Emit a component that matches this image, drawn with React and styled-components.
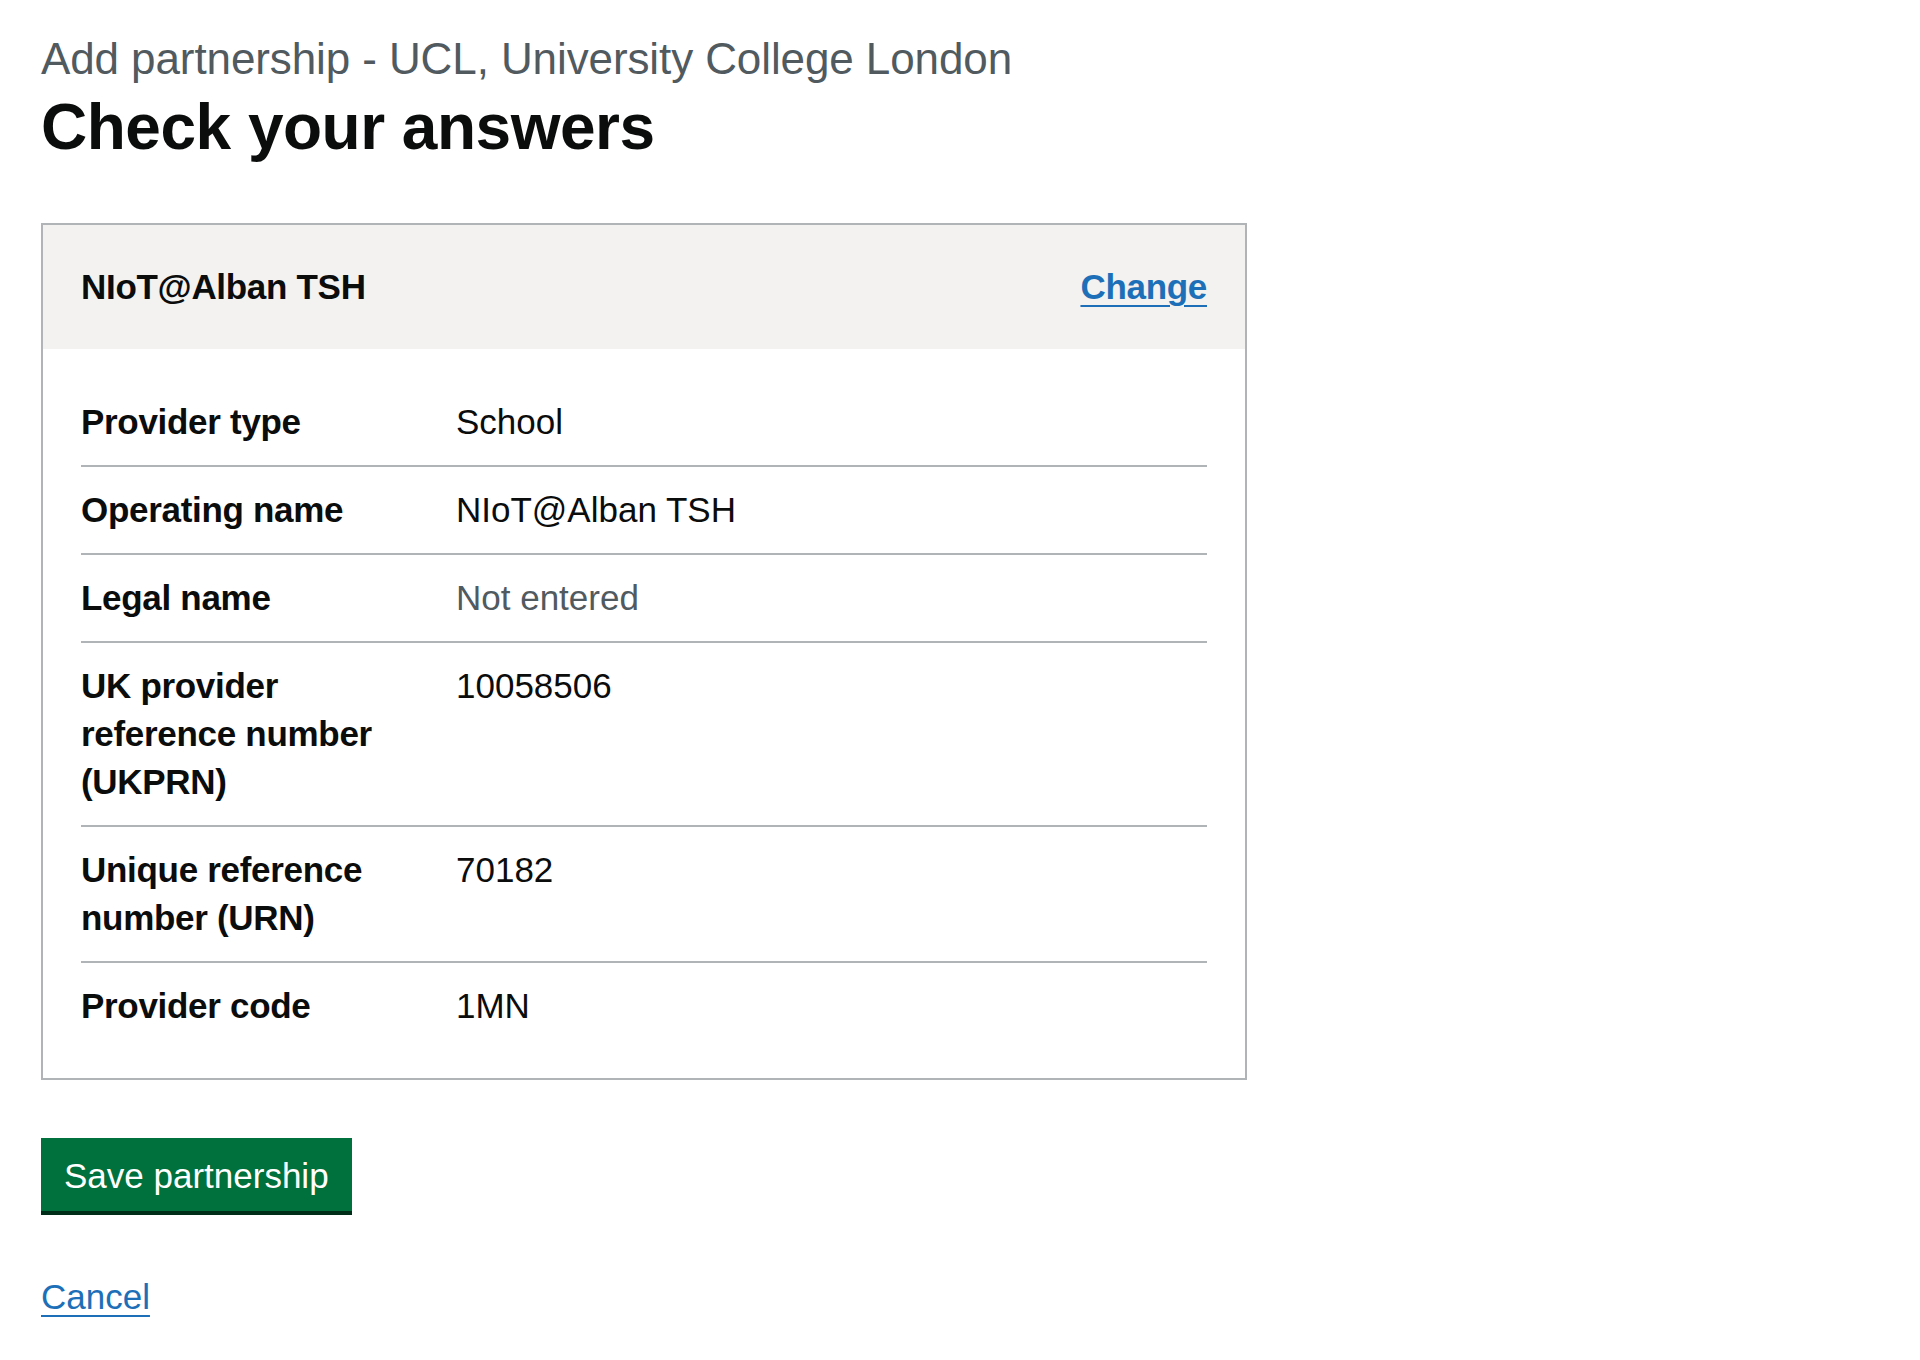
import styled, { createGlobalStyle } from "styled-components";

const GlobalStyle = createGlobalStyle`
  html, body {
    margin: 0;
    padding: 0;
    background: #ffffff;
  }
  body {
    font-family: "Liberation Sans", Arial, sans-serif;
    color: #0b0c0c;
    -webkit-font-smoothing: antialiased;
  }
`;

const Page = styled.main`
  padding: 34px 41px 40px;
`;

const Caption = styled.span`
  display: block;
  font-size: 44px;
  line-height: 50px;
  color: #505a5f;
  letter-spacing: -0.1px;
`;

const Heading = styled.h1`
  margin: 5px 0 58px;
  font-size: 64px;
  line-height: 76px;
  font-weight: 700;
  letter-spacing: -0.5px;
`;

const Card = styled.section`
  width: 1206px;
  box-sizing: border-box;
  border: 2px solid #b1b4b6;
`;

const CardHeader = styled.div`
  display: flex;
  justify-content: space-between;
  align-items: center;
  padding: 38px 38px;
  background: #f3f2f1;
`;

const CardTitle = styled.h2`
  margin: 0;
  font-size: 35px;
  line-height: 48px;
  font-weight: 700;
  letter-spacing: -0.3px;
`;

const Link = styled.a`
  color: #1d70b8;
  font-size: 35px;
  line-height: 48px;
  font-weight: ${(p) => (p.$bold ? 700 : 400)};
  letter-spacing: ${(p) => (p.$bold ? "-0.3px" : "0")};
  text-decoration: underline;
  text-decoration-thickness: 2px;
  text-underline-offset: 6px;
  cursor: pointer;
`;

const LinkLine = styled.p`
  margin: 0;
  font-size: 35px;
  line-height: 48px;
`;

const CardContent = styled.dl`
  margin: 0;
  padding: 30px 38px 29px;
`;

const Row = styled.div`
  display: grid;
  grid-template-columns: 375px 1fr;
  border-bottom: 2px solid #b1b4b6;

  &:last-of-type {
    border-bottom: none;
  }
`;

const Key = styled.dt`
  padding: 19px 38px 19px 0;
  font-size: 35px;
  line-height: 48px;
  font-weight: 700;
  letter-spacing: -0.3px;
`;

const Value = styled.dd`
  margin: 0;
  padding: 19px 0;
  font-size: 35px;
  line-height: 48px;
  color: ${(p) => (p.$muted ? "#505a5f" : "#0b0c0c")};
`;

const Button = styled.button`
  display: block;
  margin: 58px 0 62px;
  padding: 20px 23px 18px;
  border: none;
  border-radius: 0;
  background: #00703c;
  color: #ffffff;
  font-family: "Liberation Sans", Arial, sans-serif;
  font-size: 35px;
  line-height: 35px;
  box-shadow: 0 4px 0 #002d18;
  cursor: pointer;
`;

const rows = [
  { key: "Provider type", value: "School" },
  { key: "Operating name", value: "NIoT@Alban TSH" },
  { key: "Legal name", value: "Not entered", muted: true },
  { key: "UK provider reference number (UKPRN)", value: "10058506" },
  { key: "Unique reference number (URN)", value: "70182" },
  { key: "Provider code", value: "1MN" },
];

export default function App() {
  return (
    <>
      <GlobalStyle />
      <Page>
        <Caption>Add partnership - UCL, University College London</Caption>
        <Heading>Check your answers</Heading>

        <Card>
          <CardHeader>
            <CardTitle>NIoT@Alban TSH</CardTitle>
            <Link $bold>Change</Link>
          </CardHeader>
          <CardContent>
            {rows.map((r) => (
              <Row key={r.key}>
                <Key>{r.key}</Key>
                <Value $muted={r.muted}>{r.value}</Value>
              </Row>
            ))}
          </CardContent>
        </Card>

        <Button>Save partnership</Button>
        <LinkLine>
          <Link>Cancel</Link>
        </LinkLine>
      </Page>
    </>
  );
}
